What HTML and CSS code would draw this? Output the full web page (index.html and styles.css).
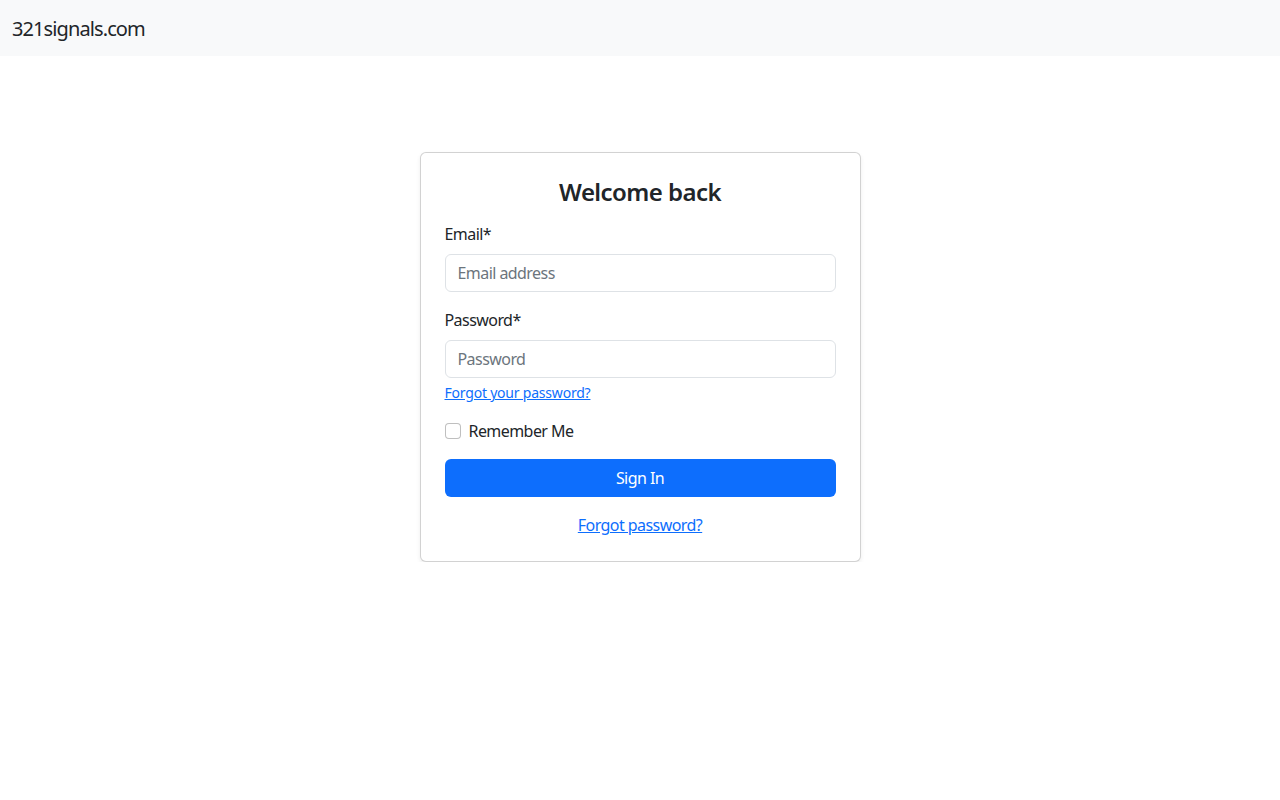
FILE: index.html
```html
<!DOCTYPE html>
<html lang="en">
<head>
<meta charset="utf-8">
<title>321signals.com</title>
<link rel="stylesheet" href="styles.css">
</head>
<body>
<nav class="navbar">
  <a class="brand" href="#">321signals.com</a>
</nav>
<main class="main">
  <div class="card">
    <h2 class="title">Welcome back</h2>
    <form class="form">
      <div class="field">
        <label class="label" for="email">Email*</label>
        <input class="input" id="email" type="email" placeholder="Email address">
      </div>
      <div class="field">
        <label class="label" for="pw">Password*</label>
        <input class="input" id="pw" type="password" placeholder="Password">
        <a class="small-link" href="#">Forgot your password?</a>
      </div>
      <label class="check">
        <span class="box"></span>
        <span>Remember Me</span>
      </label>
      <button class="btn" type="button">Sign In</button>
      <div class="bottom"><a class="link" href="#">Forgot password?</a></div>
    </form>
  </div>
</main>
</body>
</html>
```
FILE: styles.css
```css
* { box-sizing: border-box; }
html, body { margin: 0; padding: 0; }
body {
  font-family: "Noto Sans", "Open Sans", sans-serif;
  font-size: 16px;
  line-height: 1.5;
  letter-spacing: -0.035em;
  color: #212529;
  background: #fff;
}
.navbar {
  height: 56px;
  background: #f8f9fa;
  display: flex;
  align-items: center;
  padding: 0 12px;
}
.brand {
  font-size: 20px;
  line-height: 30px;
  color: #212529;
  text-decoration: none;
  margin-top: 2px;
  letter-spacing: -0.045em;
}
.main {
  display: flex;
  justify-content: center;
  padding-top: 96px;
}
.card {
  width: 441px;
  border: 1px solid rgba(0,0,0,.175);
  border-radius: 6px;
  box-shadow: 0 2px 4px rgba(0,0,0,.075);
  padding: 24px;
  background: #fff;
}
.title {
  margin: 0 0 16px;
  text-align: center;
  font-size: 24px;
  line-height: 29px;
  font-weight: 600;
}
.form { display: flex; flex-direction: column; }
.field { display: flex; flex-direction: column; margin-bottom: 16px; }
.label { margin-bottom: 8px; line-height: 24px; }
.input {
  height: 38px;
  border: 1px solid #dee2e6;
  border-radius: 6px;
  padding: 6px 12px;
  font: inherit;
  letter-spacing: inherit;
  color: #212529;
}
.input::placeholder { color: #6c757d; opacity: 1; }
.small-link {
  margin-top: 4px;
  font-size: 14px;
  line-height: 21px;
  letter-spacing: -0.015em;
  color: #0d6efd;
  align-self: flex-start;
}
.check {
  display: flex;
  align-items: center;
  gap: 8px;
  line-height: 24px;
  margin-bottom: 16px;
}
.box {
  width: 16px;
  height: 16px;
  border: 1px solid rgba(0,0,0,.25);
  border-radius: 4px;
  background: #fff;
}
.btn {
  height: 38px;
  border: none;
  border-radius: 6px;
  background: #0d6efd;
  color: #fff;
  font: inherit;
  letter-spacing: inherit;
  margin-bottom: 16px;
}
.bottom { text-align: center; line-height: 24px; }
.link { color: #0d6efd; }
```
